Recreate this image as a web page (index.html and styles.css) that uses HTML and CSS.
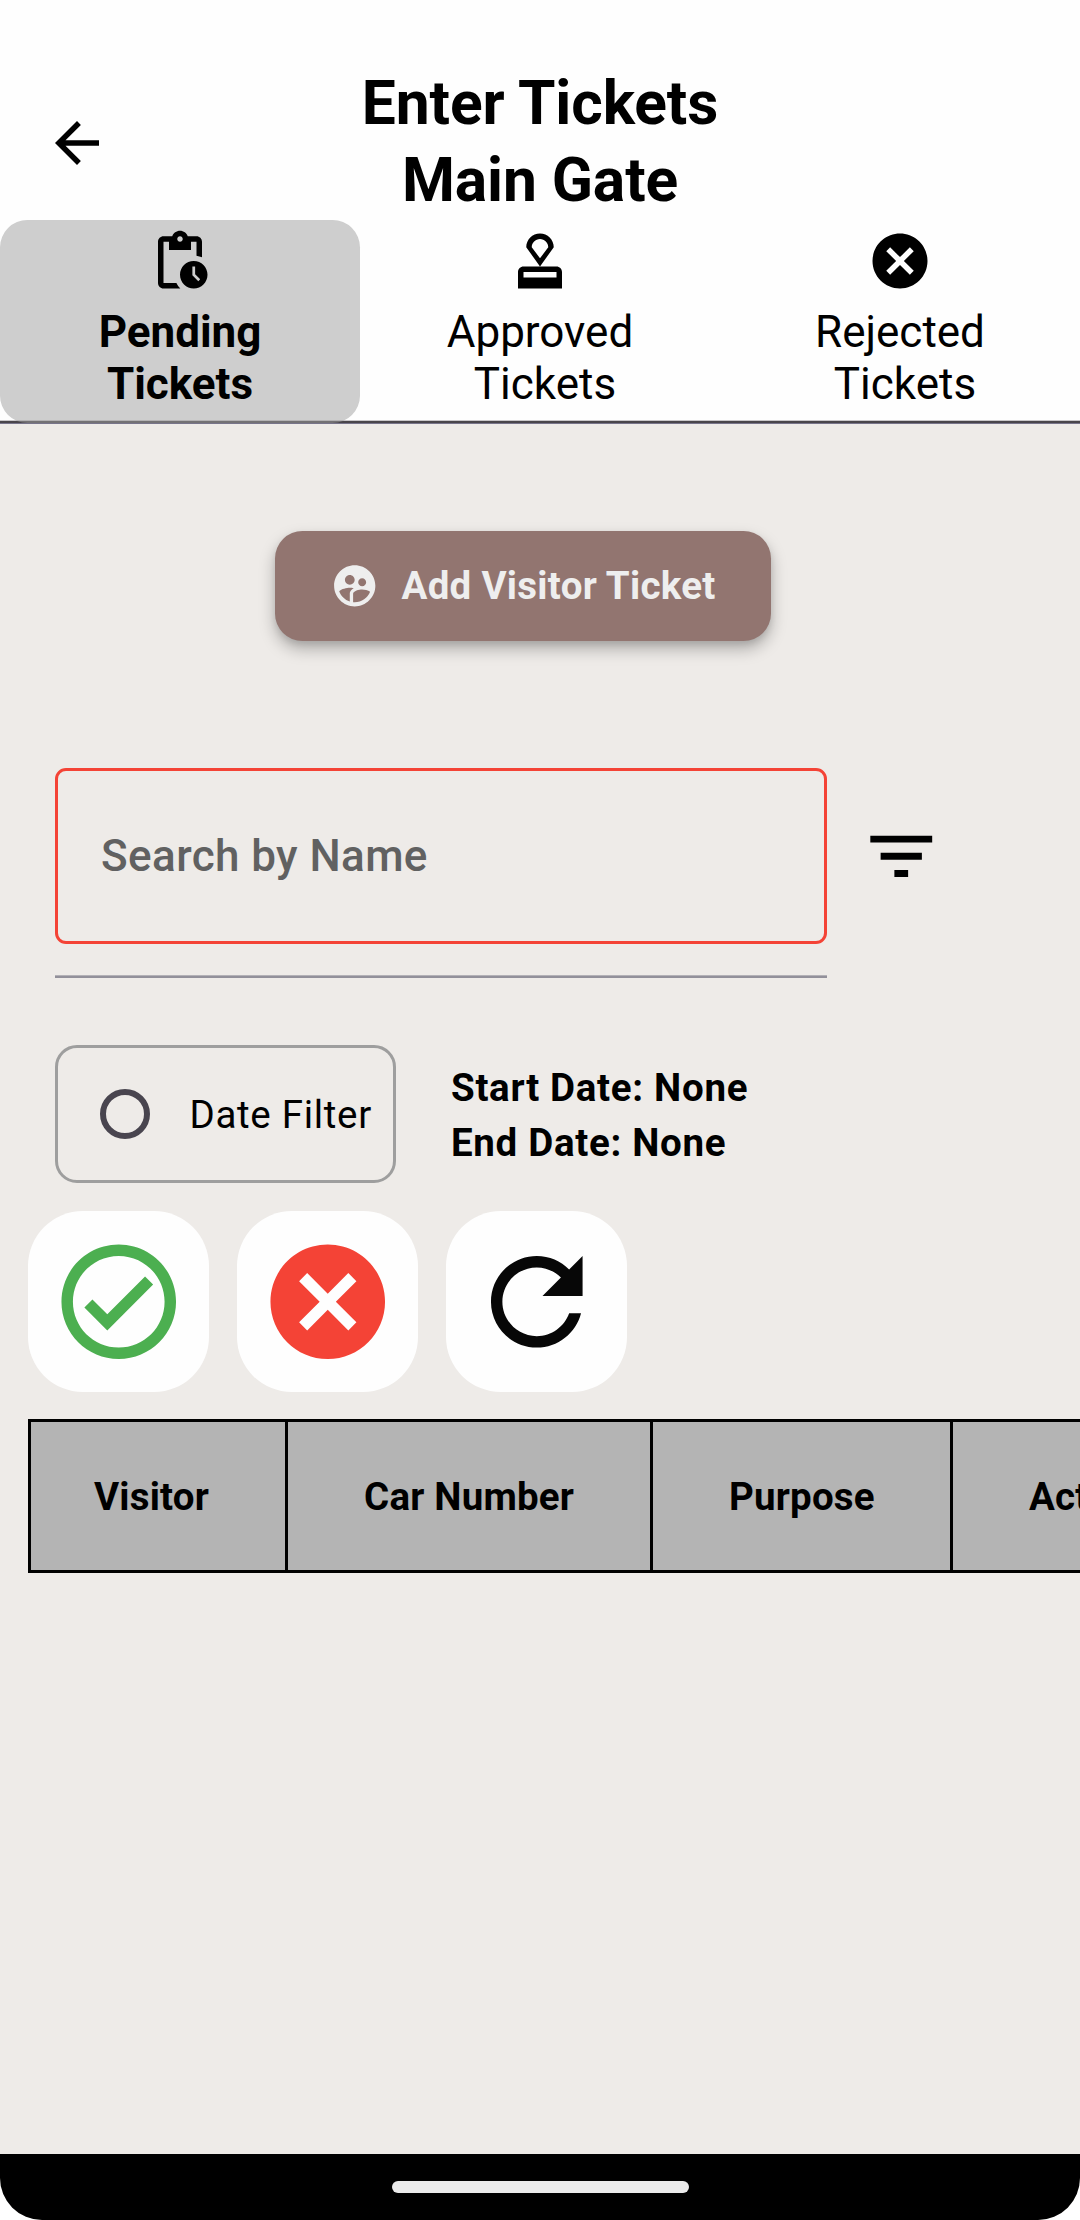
FILE: index.html
```html
<!DOCTYPE html>
<html lang="en">
<head>
<meta charset="utf-8">
<title>Enter Tickets</title>
<link rel="stylesheet" href="styles.css">
</head>
<body>
<div class="screen">
  <header class="header">
    <svg class="back" viewBox="0 0 24 24"><path d="M20 11H7.83l5.59-5.59L12 4l-8 8 8 8 1.41-1.41L7.83 13H20v-2z"/></svg>
    <h1 class="title">Enter Tickets<br>Main Gate</h1>
  </header>

  <nav class="tabs">
    <div class="tab tab-active">
      <svg class="tab-icon" viewBox="0 0 24 24"><path d="M17 12c-2.76 0-5 2.24-5 5s2.24 5 5 5 5-2.24 5-5-2.24-5-5-5zm1.65 7.35L16.5 17.2V14h1v2.79l1.85 1.85-.7.71zM18 3h-3.18C14.4 1.84 13.3 1 12 1s-2.4.84-2.82 2H6c-1.1 0-2 .9-2 2v15c0 1.1.9 2 2 2h6.11c-.59-.57-1.07-1.25-1.42-2H6V5h2v3h8V5h2v5.08c.71.1 1.38.31 2 .6V5c0-1.1-.9-2-2-2zm-6 2c-.55 0-1-.45-1-1s.45-1 1-1 1 .45 1 1-.45 1-1 1z"/></svg>
      <span class="tab-label">Pending
Tickets</span>
    </div>
    <div class="tab">
      <svg class="tab-icon" viewBox="0 0 24 24"><path fill-rule="evenodd" d="M18 14H6c-1.1 0-2 .9-2 2v6h16v-6c0-1.1-.9-2-2-2zm0 4H6v-2h12v2zM12 2C9.24 2 7 4.24 7 7l5 7 5-7c0-2.76-2.24-5-5-5zm0 9L9 7c0-1.66 1.34-3 3-3s3 1.34 3 3l-3 4z"/></svg>
      <span class="tab-label">Approved
 Tickets</span>
    </div>
    <div class="tab">
      <svg class="tab-icon" viewBox="0 0 24 24"><path d="M12 2C6.47 2 2 6.47 2 12s4.47 10 10 10 10-4.47 10-10S17.53 2 12 2zm5 13.59L15.59 17 12 13.41 8.41 17 7 15.59 10.59 12 7 8.41 8.41 7 12 10.59 15.59 7 17 8.41 13.41 12 17 15.59z"/></svg>
      <span class="tab-label">Rejected
 Tickets</span>
    </div>
  </nav>

  <main class="content">
    <button class="add-button">
      <svg class="add-icon" viewBox="0 0 24 24"><path d="M11.99 2c-5.52 0-10 4.48-10 10s4.48 10 10 10 10-4.48 10-10-4.48-10-10-10zm3.61 6.34c1.07 0 1.93.86 1.93 1.93 0 1.07-.86 1.93-1.93 1.93-1.07 0-1.93-.86-1.93-1.93-.01-1.07.86-1.93 1.93-1.93zm-6-1.58c1.3 0 2.36 1.06 2.36 2.36 0 1.3-1.06 2.36-2.36 2.36s-2.36-1.06-2.36-2.36c0-1.31 1.05-2.36 2.36-2.36zm0 9.13v3.75c-2.4-.75-4.3-2.6-5.14-4.96 1.05-1.12 3.67-1.69 5.14-1.69.53 0 1.2.08 1.9.22-1.64.87-1.9 2.02-1.9 2.68zM11.99 20c-.27 0-.53-.01-.79-.04v-4.07c0-1.42 2.94-2.13 4.4-2.13 1.07 0 2.92.39 3.84 1.15-1.17 2.97-4.06 5.09-7.45 5.09z"/></svg>
      <span>Add Visitor Ticket</span>
    </button>

    <div class="search-row">
      <div class="search-field">Search by Name</div>
      <svg class="filter-icon" viewBox="0 0 24 24"><path d="M10 18h4v-2h-4v2zM3 6v2h18V6H3zm3 7h12v-2H6v2z"/></svg>
    </div>
    <div class="underline"></div>

    <div class="date-row">
      <div class="date-filter">
        <span class="radio"></span>
        <span>Date Filter</span>
      </div>
      <div class="date-range">Start Date: None<br>End Date: None</div>
    </div>

    <div class="actions">
      <div class="action approve"><svg viewBox="0 0 24 24"><path d="M16.59 7.58L10 14.17l-2.59-2.58L6 13l4 4 8-8-1.41-1.42zM12 2C6.48 2 2 6.48 2 12s4.48 10 10 10 10-4.48 10-10S17.52 2 12 2zm0 18c-4.42 0-8-3.58-8-8s3.58-8 8-8 8 3.58 8 8-3.58 8-8 8z"/></svg></div>
      <div class="action reject"><svg viewBox="0 0 24 24"><path d="M12 2C6.47 2 2 6.47 2 12s4.47 10 10 10 10-4.47 10-10S17.53 2 12 2zm5 13.59L15.59 17 12 13.41 8.41 17 7 15.59 10.59 12 7 8.41 8.41 7 12 10.59 15.59 7 17 8.41 13.41 12 17 15.59z"/></svg></div>
      <div class="action refresh"><svg viewBox="0 0 24 24"><path d="M17.65 6.35C16.2 4.9 14.21 4 12 4c-4.42 0-7.99 3.58-7.99 8s3.57 8 7.99 8c3.73 0 6.84-2.55 7.73-6h-2.08c-.82 2.33-3.04 4-5.65 4-3.31 0-6-2.69-6-6s2.69-6 6-6c1.66 0 3.14.69 4.22 1.78L13 11h7V4l-2.35 2.35z"/></svg></div>
    </div>

    <div class="table">
      <div class="cell">Visitor</div>
      <div class="cell">Car Number</div>
      <div class="cell">Purpose</div>
      <div class="cell">Action</div>
    </div>
  </main>

  <footer class="system-bar"><span class="home-pill"></span></footer>
</div>
</body>
</html>
```
FILE: styles.css
```css
* {
  box-sizing: border-box;
}

body {
  margin: 0;
  background: #fff;
  font-family: Roboto, sans-serif;
  color: #000;
}

svg {
  display: block;
  flex: none;
  fill: currentColor;
}

.screen {
  display: flex;
  flex-direction: column;
  width: 1080px;
  height: 2220px;
  overflow: hidden;
  border-radius: 0 0 42px 42px;
  background: #eeebe8;
}

.header {
  display: grid;
  grid-template-columns: 154px 1fr 154px;
  height: 220px;
  padding-top: 65px;
  background: #fefefe;
}

.back {
  width: 66px;
  height: 66px;
  margin: 45px 0 0 44px;
}

.title {
  margin: 0;
  font-size: 60.5px;
  font-weight: 700;
  line-height: 77px;
  letter-spacing: -0.1px;
  text-align: center;
}

.tabs {
  display: grid;
  grid-template-columns: repeat(3, 1fr);
  height: 204px;
  background: linear-gradient(#fefefe 200px, #c9c7c9 200px, #c9c7c9 201px, #49454b 201px, #49454b 203px, #77748a 203px);
}

.tab {
  display: flex;
  flex-direction: column;
  align-items: center;
  gap: 12px;
  height: 203px;
  padding-top: 8px;
  border-radius: 27.5px;
}

.tab-active {
  background: rgba(158, 158, 158, 0.5);
  font-weight: 700;
}

.tab-icon {
  width: 66px;
  height: 66px;
}

.tab-label {
  font-size: 44px;
  line-height: 52px;
  text-align: center;
  white-space: pre;
}

.content {
  flex: 1;
  display: flex;
  flex-direction: column;
  align-items: flex-start;
  padding-top: 107px;
  overflow: hidden;
}

.add-button {
  display: flex;
  align-items: center;
  gap: 22px;
  width: 496px;
  height: 110px;
  margin: 0 0 0 275px;
  padding: 0 0 0 55px;
  border: 0;
  border-radius: 27.5px;
  background: #927570;
  color: #eee;
  box-shadow: 0 8px 16px rgba(0, 0, 0, 0.27), 0 3px 6px rgba(0, 0, 0, 0.08);
  font: 700 38.5px/46px Roboto, sans-serif;
  letter-spacing: 0.28px;
  white-space: nowrap;
}

.add-icon {
  width: 49.5px;
  height: 49.5px;
}

.search-row {
  display: flex;
  align-items: center;
  gap: 33px;
  margin: 127px 0 0 55px;
}

.search-field {
  display: flex;
  align-items: center;
  width: 771.5px;
  height: 176px;
  padding-left: 43px;
  border: 3px solid #f44336;
  border-radius: 11px;
  color: #616161;
  font-size: 44px;
  font-weight: 500;
  letter-spacing: 0.4px;
}

.filter-icon {
  width: 82.5px;
  height: 82.5px;
}

.underline {
  width: 771.5px;
  height: 3px;
  margin: 31px 0 0 55px;
  background: linear-gradient(#b3b1b6 1px, #92909a 1px);
}

.date-row {
  display: flex;
  align-items: center;
  gap: 55px;
  margin: 67px 0 0 55px;
  font-size: 38.5px;
  letter-spacing: 0.69px;
}

.date-filter {
  display: flex;
  align-items: center;
  gap: 40px;
  width: 341px;
  height: 138px;
  padding-left: 41.5px;
  border: 3px solid #9e9e9e;
  border-radius: 22px;
}

.radio {
  width: 50px;
  height: 50px;
  border: 6px solid #49454f;
  border-radius: 50%;
}

.date-range {
  padding-top: 2px;
  font-weight: 700;
  line-height: 55px;
}

.actions {
  display: flex;
  gap: 27.5px;
  margin: 27.5px 0 0 27.5px;
}

.action {
  padding: 22px;
  border-radius: 55px;
  background: #fefefe;
}

.action svg {
  width: 137.5px;
  height: 137.5px;
}

.approve {
  color: #4caf50;
}

.reject {
  color: #f44336;
}

.refresh {
  color: #070707;
}

.table {
  display: grid;
  grid-template-columns: 260px 365px 300px 300px;
  height: 154px;
  margin: 27px 0 0 28px;
  border: solid #000;
  border-width: 3px 0 3px 0;
  background: #b4b4b4;
  font-size: 38.5px;
  font-weight: 700;
  letter-spacing: 0.2px;
}

.cell {
  display: flex;
  align-items: center;
  padding-left: 76px;
  border-right: 3px solid #000;
}

.cell:first-child {
  padding-left: 63px;
  border-left: 3px solid #000;
}

.system-bar {
  display: flex;
  justify-content: center;
  align-items: center;
  height: 66px;
  background: #000;
}

.home-pill {
  width: 297px;
  height: 12px;
  border-radius: 6px;
  background: #ebebeb;
}
```
